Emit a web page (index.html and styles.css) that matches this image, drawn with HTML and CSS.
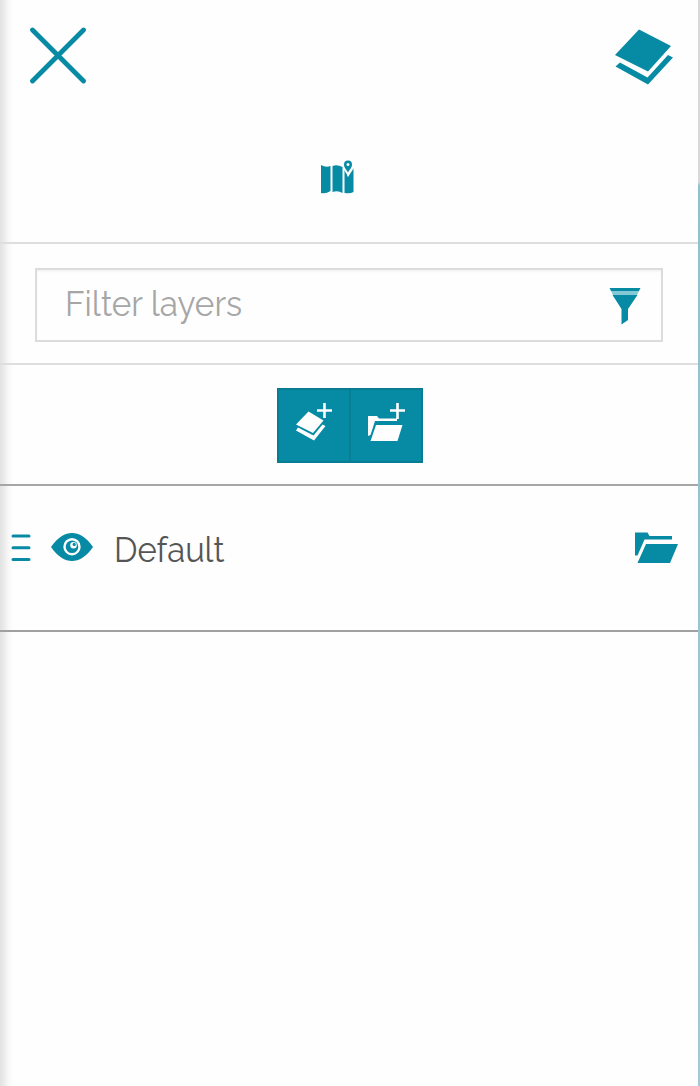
FILE: index.html
```html
<!DOCTYPE html>
<html lang="en">
<head>
<meta charset="utf-8">
<title>Layers</title>
<link rel="stylesheet" href="styles.css">
</head>
<body>
<div class="app">
<main class="panel">
  <header class="header">
    <div class="header-bar">
      <svg class="close" viewBox="0 0 60 60"><path d="M3.500 3L54.500 54M54.500 3L3.500 54" fill="none" stroke="currentColor" stroke-width="4.800" stroke-linecap="round"/></svg>
      <svg class="layers" viewBox="0 0 60 60"><path d="M25 2.500L57 19L34 44.500L1 28Z"/><path d="M6 35.500L33.500 50.500L54 28L59 30.500L34 57.500L1.500 39.500Z"/></svg>
    </div>
    <div class="tools">
      <svg class="map" viewBox="0 0 36 36"><path d="M1 5Q6 8 10.500 6V31Q6 34 1 33ZM12.500 6Q17 4 22.500 7V33Q18 30 12.500 32Z"/><path d="M24.500 8L28 17L33.500 8.500V32Q30 34 24.500 33Z"/><path class="pin" d="M28 17C26.500 12 23 10 23 6A5 5 0 0 1 33 6C33 10 29.500 12 28 17Z"/><path fill-rule="evenodd" d="M28 12.500C26.500 9.500 24 8 24 4.500A4 4 0 0 1 32 4.500C32 8 29.500 9.500 28 12.500ZM28 3A1.500 1.500 0 1 0 28 6A1.500 1.500 0 1 0 28 3Z"/></svg>
    </div>
  </header>
  <section class="filter">
    <div class="field">
      <span class="placeholder">Filter layers</span>
      <svg class="funnel" viewBox="0 0 32 38"><path d="M0.500 0H31.500L30 3H2Z"/><path class="rim" d="M2 3H30L28 7H4Z"/><path d="M3.500 7H28.500L19 21V32L12.500 36.500V21Z"/></svg>
    </div>
  </section>
  <section class="actions">
    <div class="buttons">
      <button class="button" aria-label="Add layer"><svg class="add" viewBox="0 0 40 42"><path d="M14.500 11.500L29.500 20.500L19 33L2 24.500Z"/><path d="M4 27.500L19.500 35.500L28.500 24.500L31.500 26L20 40.500L2 30.500Z"/><path class="plus" d="M30.500 3V18M23 10.500H38"/></svg></button>
      <button class="button" aria-label="Add group"><svg class="add" viewBox="0 0 40 42"><path d="M2 16H11L13 18.500H31V21H9L4.500 35L2 36Z"/><path d="M10 25H36.500L31.500 41H4.500Z"/><path class="plus" d="M31.500 3V19M24 10.500H39"/></svg></button>
    </div>
  </section>
  <section class="group">
    <svg class="grip" viewBox="0 0 20 32"><path d="M2 4H18M2 15.700H18M2 27.500H18" stroke="currentColor" stroke-width="3" stroke-linecap="round"/></svg>
    <svg class="eye" viewBox="0 0 44 30"><path fill-rule="evenodd" d="M1 15C8 5 15 1 22 1S36 5 43 15C36 25 29 29 22 29S8 25 1 15ZM22 6A8.700 8.700 0 1 0 22 23.400A8.700 8.700 0 1 0 22 6Z"/><path fill-rule="evenodd" d="M22 8.500A6.300 6.300 0 1 0 22 21.100A6.300 6.300 0 1 0 22 8.500ZM23.500 10A3.300 3.300 0 1 1 23.500 16.600A3.300 3.300 0 1 1 23.500 10Z"/><circle cx="24.200" cy="12.400" r="1.600"/></svg>
    <span class="name">Default</span>
    <svg class="folder" viewBox="0 0 44 34"><path d="M0 0.500H12.500L14.500 4H37V7.500H9.500L2.500 23.500H0Z"/><path d="M11 12H43L35 31H2.500Z"/></svg>
  </section>
</main>
<aside class="edge"></aside>
</div>
</body>
</html>
```
FILE: styles.css
```css
* { box-sizing: border-box; }
body { margin: 0; background: #fefefe; font-family: Raleway, Lato, sans-serif; }
svg { display: block; fill: currentColor; flex: none; }
.app { display: flex; height: 1086px; color: #078aa3; }
.panel {
  width: 698px;
  background: linear-gradient(90deg, #e2e2e2 0, #ebebeb 4px, #f9f9f9 9px, #fefefe 14px);
}
.edge {
  width: 2px;
  background: linear-gradient(#d9d9d9 0, #d9d9d9 182px, #8fc0cf 186px, #a3c8d8 100%);
}
.header { height: 244px; border-bottom: 2px solid #dedede; }
.header-bar { display: flex; justify-content: space-between; padding: 27px 24px 0 29px; }
.close { width: 60px; height: 60px; }
.layers { width: 60px; height: 60px; }
.tools { display: flex; justify-content: center; padding: 73px 23px 0 0; }
.map { width: 36px; height: 36px; }
.pin { fill: #fefefe; }
.filter { height: 121px; padding: 24px 35px 0; border-bottom: 2px solid #dedede; }
.field {
  display: flex;
  align-items: center;
  justify-content: space-between;
  height: 74px;
  padding: 0 20px 0 28px;
  border: 2px solid #dcdcdc;
  background: #fefefe;
  box-shadow: inset 0 2px 2px #f5f5f5;
}
.placeholder { padding-bottom: 2px; font-size: 33.3px; line-height: 40px; color: #a6a6a6; transform: scaleY(1.06); }
.funnel { width: 32px; height: 38px; margin-top: 3px; }
.rim { fill: #83c8d5; }
.actions { display: flex; justify-content: center; height: 121px; padding: 23px 0 0 2px; border-bottom: 2px solid #a6a6a6; }
.buttons { display: flex; width: 146px; height: 75px; border: 2px solid #087c93; background: #078aa3; }
.button { display: flex; flex: 1; padding: 10px 0 0 15px; border: 0; background: none; color: #fefefe; }
.button + .button { border-left: 2px solid #087f96; }
.add { width: 40px; height: 42px; }
.plus { fill: none; stroke: currentColor; stroke-width: 2.6; }
.group { display: flex; height: 146px; padding: 46px 19px 0 11px; border-bottom: 2px solid #a0a0a0; }
.grip { width: 20px; height: 32px; }
.eye { width: 44px; height: 30px; margin-left: 19px; }
.name { align-self: flex-start; margin: -2px 0 0 20px; font-size: 32.8px; line-height: 40px; color: #555; transform: scaleY(1.08); }
.folder { width: 44px; height: 34px; margin-left: auto; }
```
